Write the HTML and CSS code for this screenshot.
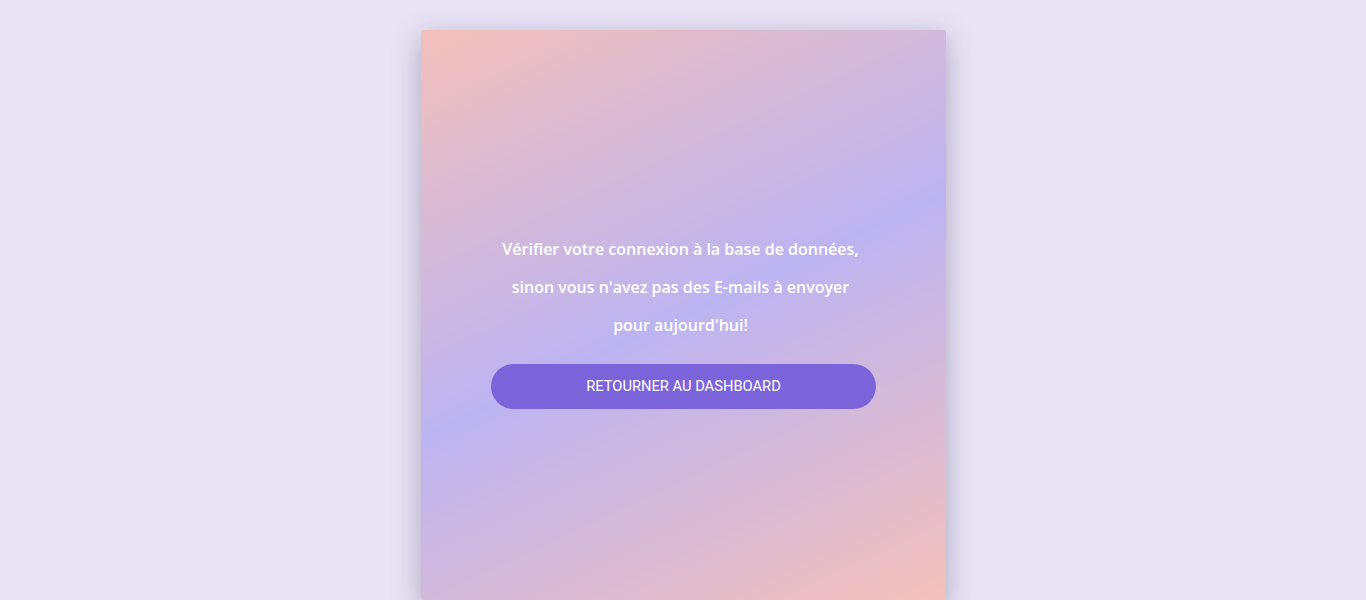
FILE: index.html
```html
<!DOCTYPE html>
<html lang="fr">
<head>
<meta charset="utf-8">
<title>Emails</title>
<link rel="stylesheet" href="styles.css">
</head>
<body>
<main class="page">
  <section class="card">
    <p class="message">Vérifier votre connexion à la base de données,<br>sinon vous n'avez pas des E-mails à envoyer <br>pour aujourd'hui!</p>
    <a class="btn" href="#">Retourner au dashboard</a>
  </section>
</main>
</body>
</html>
```
FILE: styles.css
```css
html, body {
  margin: 0;
  padding: 0;
  height: 100%;
  overflow: hidden;
}
body {
  background: #e8e4f5;
  font-family: "Open Sans", "Liberation Sans", sans-serif;
}
.page {
  display: flex;
  justify-content: center;
  padding-top: 30px;
  padding-left: 1px;
}
.card {
  width: 525px;
  height: 570px;
  box-sizing: border-box;
  background: linear-gradient(155deg, #f3c0bb 0%, #bcb4f1 50%, #f3c0bb 100%);
  box-shadow: 0 8px 28px rgba(60, 50, 90, 0.35);
  border-radius: 2px;
  display: flex;
  flex-direction: column;
  align-items: center;
  padding-top: 199.5px;
}
.message {
  margin: 0 0 19px;
  padding-right: 6px;
  color: #ffffff;
  font-size: 16px;
  font-weight: 600;
  line-height: 38.4px;
  text-align: center;
}
.btn {
  display: flex;
  align-items: center;
  justify-content: center;
  width: 385px;
  height: 45px;
  border-radius: 23px;
  background: #7b63da;
  color: #ffffff;
  font-family: Roboto, "Liberation Sans", sans-serif;
  font-size: 14.7px;
  text-transform: uppercase;
  text-decoration: none;
}
```
